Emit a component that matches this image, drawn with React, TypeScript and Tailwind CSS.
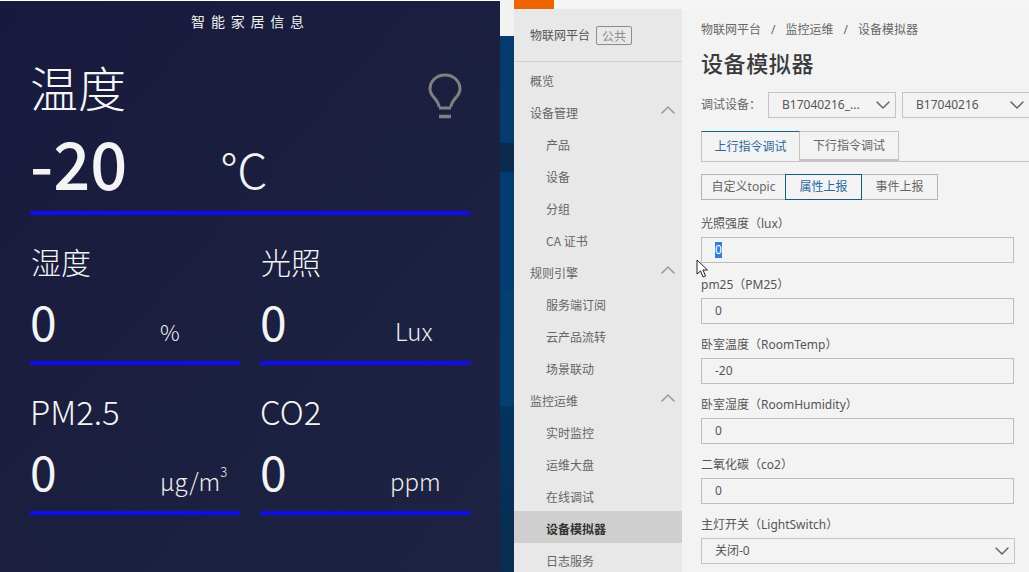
import { ChevronDown, ChevronUp, ChevronLeft } from "lucide-react";

const cjk = "font-['Noto_Sans_CJK_SC','Noto_Sans',sans-serif]";
const ui = "font-['Noto_Sans','Noto_Sans_CJK_SC',sans-serif]";

function Metric({ label, value, unit, labelClass, unitClass }: { label: string; value: string; unit: React.ReactNode; labelClass: string; unitClass: string }) {
  return (
    <div className="w-[210px]">
      <div className={`h-[49px] leading-[46px] font-light text-[#f4f4f4] ${labelClass}`}>{label}</div>
      <div className="flex h-[74px] items-start">
        <div className="mt-[-2px] w-[130px] text-[48px] leading-[70px] font-normal text-[#f4f4f4]">{value}</div>
        <div className={`mt-[26px] leading-[36px] font-light text-[#eeeeee] ${unitClass}`}>{unit}</div>
      </div>
      <div className="h-1 bg-[#0d0df0]" />
    </div>
  );
}

function LeftPanel() {
  return (
    <div className={`h-full w-[500px] shrink-0 border-t border-white bg-gradient-to-br from-[#171a3c] to-[#1f2343] px-[30px] ${cjk}`}>
      <div className="h-[41px] pl-[1px] text-center text-[14px] leading-[40px] tracking-[5.800px] text-[#f0f0f0]">智能家居信息</div>
      <div className="flex h-[72px] items-start justify-between pt-[14px]">
        <div className="text-[48px] leading-[60px] font-light text-[#f6f6f6]">温度</div>
        <svg className="mt-[17px] mr-[8px]" width="34" height="46" viewBox="0 0 34 46" fill="none" stroke="#808080" strokeWidth="3">
          <path d="M11 34c0-4-2-6-5-9.500C3 21 2 18.500 2 16 2 8 8.500 2 17 2s15 6 15 14c0 2.500-1 5-4 8.500-3 3.500-5 5.500-5 9.500" />
          <path d="M11 35h12" />
          <path d="M11 43.500h12" strokeWidth="3.500" />
        </svg>
      </div>
      <div className="flex h-[97px] items-start">
        <div className="w-[190px] text-[65px] leading-[96px] font-medium text-[#f4f4f4]">-20</div>
        <div className="mt-[8px] text-[48px] leading-[92px] font-light text-[#f2f2f2]">℃</div>
      </div>
      <div className="h-1 bg-[#0d0df0]" />
      <div className="mt-[23px] grid grid-cols-[210px_210px] gap-x-[20px] gap-y-[23px]">
        <Metric label="湿度" labelClass="pl-px text-[30px]" value="0" unit="%" unitClass="text-[22px]" />
        <Metric label="光照" labelClass="pl-px text-[30px]" value="0" unit="Lux" unitClass="ml-[5px] text-[24px]" />
        <Metric label="PM2.5" labelClass="text-[33px]" value="0" unit={<>μg/m<sup className="align-[8px] text-[13px] leading-none">3</sup></>} unitClass="text-[24px]" />
        <Metric label="CO2" labelClass="text-[33px]" value="0" unit="ppm" unitClass="text-[24px]" />
      </div>
    </div>
  );
}

function DesktopStrip() {
  return (
    <div className="flex h-full w-[14px] shrink-0 flex-col">
      <div className="h-[36px] bg-[#f2f2f2]" />
      <div className="h-[107px] bg-[#053c70]" />
      <div className="h-[29px] bg-[#0a2a4e]" />
      <div className="h-[118px] bg-[#033c72]" />
      <div className="h-[116px] bg-[#04406f]" />
      <div className="flex-1 bg-gradient-to-b from-[#03335f] to-[#0a2c4f]" />
    </div>
  );
}

type Nav = { t: string; kind?: "group" | "sub" | "active" };
const nav: Nav[] = [
  { t: "概览" },
  { t: "设备管理", kind: "group" },
  { t: "产品", kind: "sub" },
  { t: "设备", kind: "sub" },
  { t: "分组", kind: "sub" },
  { t: "CA 证书", kind: "sub" },
  { t: "规则引擎", kind: "group" },
  { t: "服务端订阅", kind: "sub" },
  { t: "云产品流转", kind: "sub" },
  { t: "场景联动", kind: "sub" },
  { t: "监控运维", kind: "group" },
  { t: "实时监控", kind: "sub" },
  { t: "运维大盘", kind: "sub" },
  { t: "在线调试", kind: "sub" },
  { t: "设备模拟器", kind: "active" },
  { t: "日志服务", kind: "sub" },
];

function Sidebar() {
  return (
    <div className="relative w-[168px] shrink-0 bg-[#e8e8e8]">
      <div className="flex h-[53px] items-center gap-[6px] border-b border-[#cfcfcf] pl-[16px] text-[12px] text-[#555555]">
        <span>物联网平台</span>
        <span className="rounded-[2px] border border-[#8c8c8c] px-[5px] text-[12px] leading-[17px] text-[#8c8c8c]">公共</span>
      </div>
      <div className="pt-px">
        {nav.map((n) => (
          <div
            key={n.t}
            className={`flex h-[32px] items-center justify-between pt-[4px] text-[12px] ${
              n.kind === "sub" ? "pl-[32px] text-[#666666]" : n.kind === "active" ? "bg-[#cfcfcf] pl-[32px] font-bold text-[#333333]" : "pl-[16px] text-[#666666]"
            }`}
          >
            <span>{n.t}</span>
            {n.kind === "group" && <ChevronUp className="mr-[2px] mb-[7px] text-[#999999]" size={24} strokeWidth={1.500} />}
          </div>
        ))}
      </div>
      <div className="absolute top-[290px] left-full flex h-[49px] w-[14px] items-center justify-center bg-[#e0e0e0] [clip-path:polygon(0_0,100%_16%,100%_84%,0_100%)]">
        <ChevronLeft className="ml-[2px] shrink-0 text-[#a8a8a8]" size={24} strokeWidth={1.500} />
      </div>
    </div>
  );
}

function Field({ label, value, selected }: { label: string; value: string; selected?: boolean }) {
  return (
    <div className={`w-[313px] ${selected ? "h-[61px]" : "h-[60px]"}`}>
      <div className="h-[26px] text-[12px] leading-[26px] text-[#555555]">{label}</div>
      <div className="flex h-[26px] items-center border border-[#bdbdbd] pl-[13px] text-[12px] text-[#555555]">
        {selected ? <span className="bg-[#2f7fd6] leading-[16px] text-white">{value}</span> : value}
      </div>
    </div>
  );
}

function Select({ value, className }: { value: string; className: string }) {
  return (
    <div className={`flex h-[26px] shrink-0 items-center justify-between border border-[#c4c4c4] pl-[13px] text-[12px] text-[#555555] ${className}`}>
      <span>{value}</span>
      <ChevronDown className="text-[#666666]" size={24} strokeWidth={1.500} />
    </div>
  );
}

function Main() {
  return (
    <div className={`relative min-w-0 flex-1 bg-[#f3f3f3] pl-[19px] ${ui}`}>
      <div className="flex h-[40px] items-center gap-[10px] pt-[1px] text-[12px] text-[#666666]">
        <span>物联网平台</span><span>/</span><span>监控运维</span><span>/</span><span>设备模拟器</span>
      </div>
      <div className="h-[32px] text-[22px] leading-[28px] font-medium tracking-[0.600px] text-[#3a3a3a]">设备模拟器</div>
      <div className="mt-[11px] flex w-[400px] items-center text-[12px] text-[#666666]">
        <span className="w-[67px] shrink-0">调试设备：</span>
        <Select value="B17040216_..." className="w-[128px]" />
        <Select value="B17040216" className="ml-[6px] w-[128px]" />
      </div>
      <div className="mt-[13px] flex h-[31px] border-b border-[#c4c4c4] text-[12px]">
        <div className="flex w-[99px] items-center justify-center border-x border-t border-[#c4c4c4] border-t-[#0a6a8a] text-[#2b6aa0]">上行指令调试</div>
        <div className="flex w-[99px] items-center justify-center border-t border-r border-b-2 border-[#c4c4c4] text-[#666666]">下行指令调试</div>
      </div>
      <div className="mt-[12px] flex h-[26px] text-[12px]">
        <div className="flex w-[84px] items-center justify-center border-y border-l border-[#b5b5b5] text-[#666666]">自定义topic</div>
        <div className="flex w-[77px] items-center justify-center border border-[#0f5f78] text-[#2b6aa0]">属性上报</div>
        <div className="flex w-[76px] items-center justify-center border-y border-r border-[#b5b5b5] text-[#666666]">事件上报</div>
      </div>
      <div className="mt-[11px]">
        <Field label="光照强度（lux）" value="0" selected />
        <Field label="pm25（PM25）" value="0" />
        <Field label="卧室温度（RoomTemp）" value="-20" />
        <Field label="卧室湿度（RoomHumidity）" value="0" />
        <Field label="二氧化碳（co2）" value="0" />
        <div className="h-[26px] text-[12px] leading-[26px] text-[#555555]">主灯开关（LightSwitch）</div>
        <Select value="关闭-0" className="w-[314px]" />
      </div>
      <svg className="absolute top-[250px] left-[14px]" width="13" height="19" viewBox="0 0 13 19" fill="#ffffff" stroke="#222222" strokeWidth="1">
        <path d="M1 1v14l3.500-3 2.500 6 2.500-1-2.500-6h4.500z" />
      </svg>
    </div>
  );
}

export default function App() {
  return (
    <div className="flex h-[572px] w-[1029px] overflow-hidden">
      <LeftPanel />
      <DesktopStrip />
      <div className={`flex min-w-0 flex-1 flex-col ${cjk}`}>
        <div className="h-[9px] shrink-0 bg-[#f5f5f5]">
          <div className="h-full w-[40px] bg-[#ee6400]" />
        </div>
        <div className="flex min-h-0 flex-1">
          <Sidebar />
          <Main />
        </div>
      </div>
    </div>
  );
}
